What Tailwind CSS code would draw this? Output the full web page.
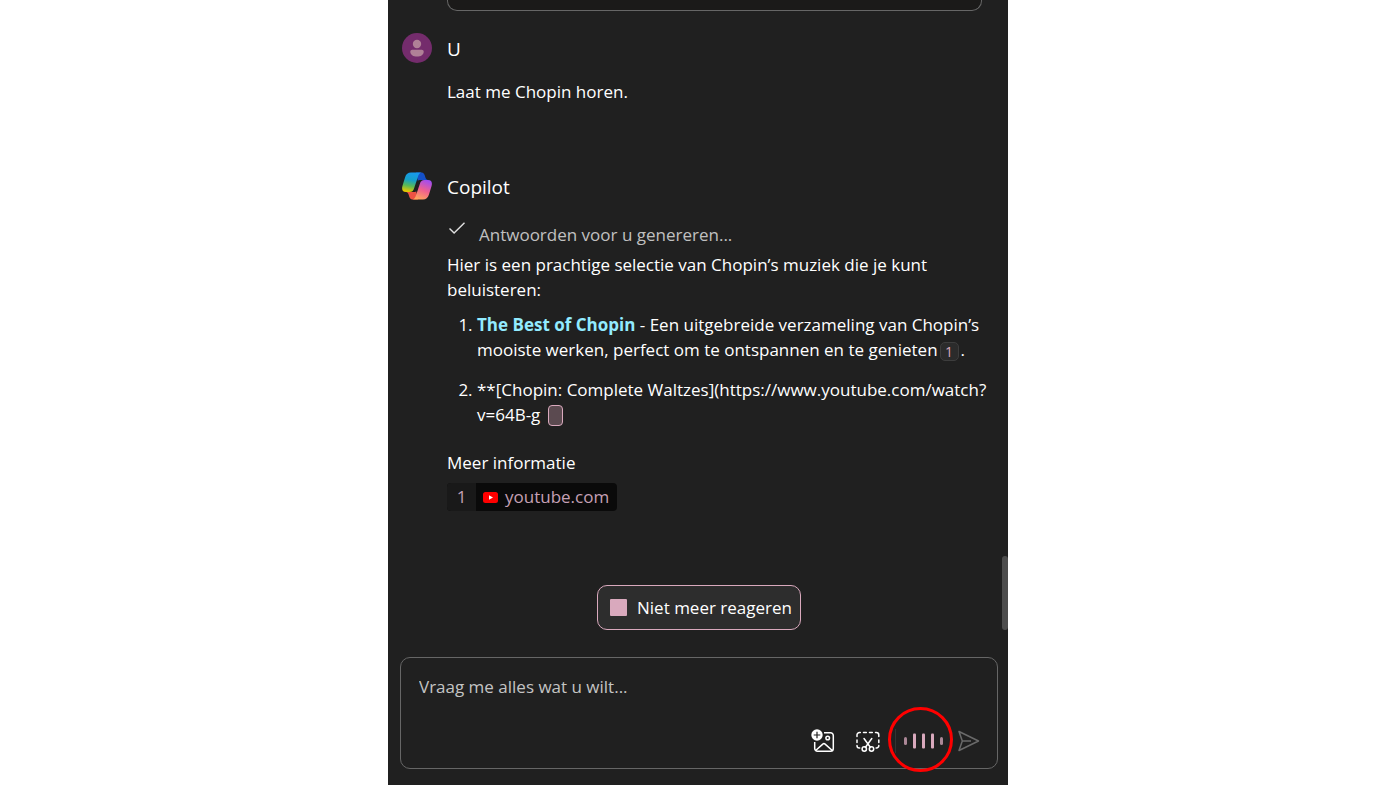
<!DOCTYPE html>
<html lang="nl">
<head>
  <meta charset="UTF-8">
  <meta name="viewport" content="width=device-width, initial-scale=1.0">
  <title>Copilot</title>
  <script src="https://cdn.jsdelivr.net/npm/@tailwindcss/browser@4"></script>
</head>
<body class="bg-white font-['Segoe_UI','Open_Sans',sans-serif]">
  <main class="relative mx-auto flex h-screen max-w-[620px] flex-col overflow-hidden bg-[#202020] text-[17px] leading-[25px] text-white">

    <!-- Conversation -->
    <div class="flex-1 pl-[14px] pr-[26px]">
      <div class="ml-[45px] h-[11px] rounded-b-[10px] border border-t-0 border-[#666] bg-[#1b1a19]"></div>

      <section class="mt-[22px]">
        <div class="flex items-center gap-[15px]">
          <svg class="size-[30px]" viewBox="0 0 30 30" aria-hidden="true">
            <circle cx="15" cy="15" r="15" fill="#742c6c"/>
            <circle cx="15" cy="11" r="4.200" fill="#b08197"/>
            <path d="M10.200 16.800h9.600c1.100 0 1.900.8 1.900 1.900 0 3-2.800 4.900-6.700 4.900s-6.700-1.900-6.700-4.900c0-1.100.8-1.900 1.900-1.900z" fill="#b08197"/>
          </svg>
          <h2 class="pt-[2px] text-[19px]">U</h2>
        </div>
        <p class="ml-[45px] mt-4">Laat me Chopin horen.</p>
      </section>

      <section class="mt-[67px]">
        <div class="flex items-center gap-[15px]">
          <svg class="size-[30px]" viewBox="0 -1.500 30 30" aria-hidden="true">
            <defs>
              <linearGradient id="cool" x1="0.6" y1="0" x2="0.4" y2="1">
                <stop offset="0" stop-color="#1899ee"/>
                <stop offset="0.4" stop-color="#15a0c8"/>
                <stop offset="0.7" stop-color="#59b957"/>
                <stop offset="1" stop-color="#e8c800"/>
              </linearGradient>
              <linearGradient id="warm" x1="0.7" y1="0" x2="0.3" y2="1">
                <stop offset="0" stop-color="#a24df0"/>
                <stop offset="0.5" stop-color="#f0608f"/>
                <stop offset="1" stop-color="#ffa65c"/>
              </linearGradient>
            </defs>
            <path d="M14 0h5.500c2 0 2.800 1.300 3.400 3.200l.6 2c.4 1.200 1.200 2.300 2.500 2.300h-6.500c-2 0-3 .3-3.600 1z" fill="#1450c8"/>
            <path d="M16 27h-5.500c-2 0-2.800-1.300-3.400-3.200l-.6-2c-.4-1.200-1.200-2.300-2.500-2.300h6.500c2 0 3-.3 3.600-1z" fill="#ee5244"/>
            <path d="M9 0h10.500c-2 .3-2.900 2-3.700 4.700L12.200 15.500c-1 3-2.100 4-4.700 4H4c-4 0-4.400-3-3.500-6.300l2.600-8.500C4.100 1.500 6 0 9 0z" fill="url(#cool)"/>
            <path d="M21 27H10.500c2-.3 2.900-2 3.700-4.700L17.800 11.500C18.800 8.500 19.900 7.500 22.500 7.500H26c4 0 4.400 3 3.500 6.300l-2.600 8.500C25.900 25.500 24 27 21 27z" fill="url(#warm)"/>
            <path d="M16.200 8.500c.6-.8 1.400-1 3-1-1.300.9-1.800 2.200-2.400 4l-2 6.500c-.7.800-1.400 1.500-4 1.500 1.300-.9 1.600-2.200 2.200-4z" fill="#202020"/>
          </svg>
          <h2 class="pt-[2px] text-[19px]">Copilot</h2>
        </div>

        <div class="ml-[45px] mt-[21px]">
          <div class="flex gap-[12px] text-[#c0c0c0]">
            <svg class="h-[14px] w-5" viewBox="0 0 20 14" fill="none" stroke="#e0e0e0" stroke-width="1.400" aria-hidden="true">
              <path d="M2.500 6.500l4.600 4.600L17.500 .7"/>
            </svg>
            <p>Antwoorden voor u genereren...</p>
          </div>
          <p class="mt-[5px]">Hier is een prachtige selectie van Chopin’s muziek die je kunt beluisteren:</p>

          <ol class="-mr-4 mt-[10px] list-outside list-decimal space-y-[15px] pl-[30px]">
            <li><a href="#" class="font-bold text-[#92ebff]">The Best of Chopin</a> - Een uitgebreide verzameling van Chopin’s mooiste werken, perfect om te ontspannen en te genieten<a href="#" class="mx-[2px] inline-block h-[19px] w-[19px] rounded-[5px] border border-[#3d3d3d] bg-[#2b2b2b] text-center align-middle text-[14px] leading-[18px] text-[#d9a9bd]">1</a>.</li>
            <li>**[Chopin: Complete Waltzes](https://www.youtube.com/watch?<br>v=64B-g <span class="ml-[3px] inline-block h-[21px] w-[15px] rounded-[4px] border border-[#d9a9bd] bg-[#5b4a50] align-[-5px]"></span></li>
          </ol>

          <p class="mt-[23px]">Meer informatie</p>
          <a href="#" class="mt-2 inline-flex h-7 overflow-hidden rounded bg-[#0a0a0a] leading-7 text-[#c5a0b5]">
            <span class="w-[29px] bg-[#191919] text-center">1</span>
            <span class="flex items-center gap-[7px] pl-[7px] pr-2">
              <svg class="h-[11px] w-[15px]" viewBox="0 0 15 11" aria-hidden="true">
                <rect width="15" height="11" rx="2.500" fill="#f00"/>
                <path d="M6 3.200v4.600l4-2.300z" fill="#fff"/>
              </svg>
              youtube.com
            </span>
          </a>
        </div>
      </section>
    </div>

    <!-- Prompt -->
    <form class="flex flex-col items-center gap-[27px] pb-4 pl-3 pr-[10px]">
      <button type="button" class="flex h-[45px] items-center gap-[9px] rounded-[10px] border border-[#d9a9bd] bg-[#2d2d2d] pl-[11px] pr-2">
        <svg class="size-[19px]" viewBox="0 0 19 19" aria-hidden="true"><rect x="1" y="1" width="17" height="17" rx="1" fill="#d9a9bd"/></svg>
        Niet meer reageren
      </button>

      <div class="h-[112px] w-full rounded-[10px] border border-[#666] pl-[18px] pr-[17px] pt-4">
        <textarea rows="2" aria-label="Vraag me alles wat u wilt" placeholder="Vraag me alles wat u wilt..." class="block h-[55px] w-full resize-none bg-transparent outline-none placeholder:text-[#c4c4c4]"></textarea>
        <div class="flex items-center justify-end gap-[15px]">
          <button type="button" aria-label="Afbeelding toevoegen" class="mr-[6px]">
            <svg class="size-6" viewBox="0 0 24 24" fill="none" stroke="#fff" stroke-width="1.500">
              <path d="M13 3.700h6.500a2.800 2.800 0 0 1 2.800 2.800v13a2.800 2.800 0 0 1-2.800 2.800h-13a2.800 2.800 0 0 1-2.800-2.800V13"/>
              <path d="M4.600 21.500l7.200-6.400a1.700 1.700 0 0 1 2.300 0l7.200 6.400"/>
              <circle cx="16.700" cy="9" r="1.800"/>
              <circle cx="6" cy="6" r="5.700" fill="#fff" stroke="none"/>
              <path d="M6 2.700v6.600M2.700 6h6.600" stroke="#202020" stroke-width="1.200"/>
            </svg>
          </button>
          <button type="button" aria-label="Schermafbeelding maken">
            <svg class="size-6" viewBox="0 0 24 24" fill="none" stroke="#fff" stroke-width="1.500" stroke-linecap="round">
              <path d="M1 7.500V6a2.500 2.500 0 0 1 2.500-2.500h.8M7.500 3.500h2.800M13.500 3.500h2.800M19.500 3.500h.8A2.500 2.500 0 0 1 22.800 6v1.500M22.800 11v2.500M1 11v2.500M1 16.500v.2A2.300 2.300 0 0 0 3.300 19h.4M22.800 16.500v.2a2.300 2.300 0 0 1-2.300 2.300h-.4"/>
              <path d="M8 9.500l6.500 9M15.800 9.500l-6.500 9"/>
              <circle cx="8.300" cy="20" r="2.200"/>
              <circle cx="15.500" cy="20" r="2.200"/>
            </svg>
          </button>
          <button type="button" aria-label="Spraakinvoer" class="relative border-l border-[#333] pl-2">
            <svg class="h-6 w-[39px]" viewBox="0 0 39 24" fill="#d9a9bd">
              <rect x="0" y="8" width="3" height="8" rx="1.500" opacity=".75"/>
              <rect x="9" y="4.500" width="3" height="15" rx="1"/>
              <rect x="18" y="4.500" width="3" height="15" rx="1"/>
              <rect x="27" y="4.500" width="3" height="15" rx="1"/>
              <rect x="36" y="8" width="3" height="8" rx="1.500" opacity=".75"/>
            </svg>
            <span class="pointer-events-none absolute -left-2 -top-[22px] size-[65px] rounded-full border-3 border-[#ff0000]"></span>
          </button>
          <button type="submit" aria-label="Verzenden">
            <svg class="h-6 w-[22px]" viewBox="0 0 22 24" fill="none" stroke="#6a6a6a" stroke-width="1.500" stroke-linejoin="round">
              <path d="M1 2.500L20.500 12 1 21.500 4.300 12z"/>
              <path d="M4.300 12H13"/>
            </svg>
          </button>
        </div>
      </div>
    </form>

    <!-- Scroll thumb -->
    <div class="absolute right-0 top-[556px] h-[74px] w-[6px] rounded-full bg-[#4d4d4d]"></div>
  </main>
</body>
</html>
